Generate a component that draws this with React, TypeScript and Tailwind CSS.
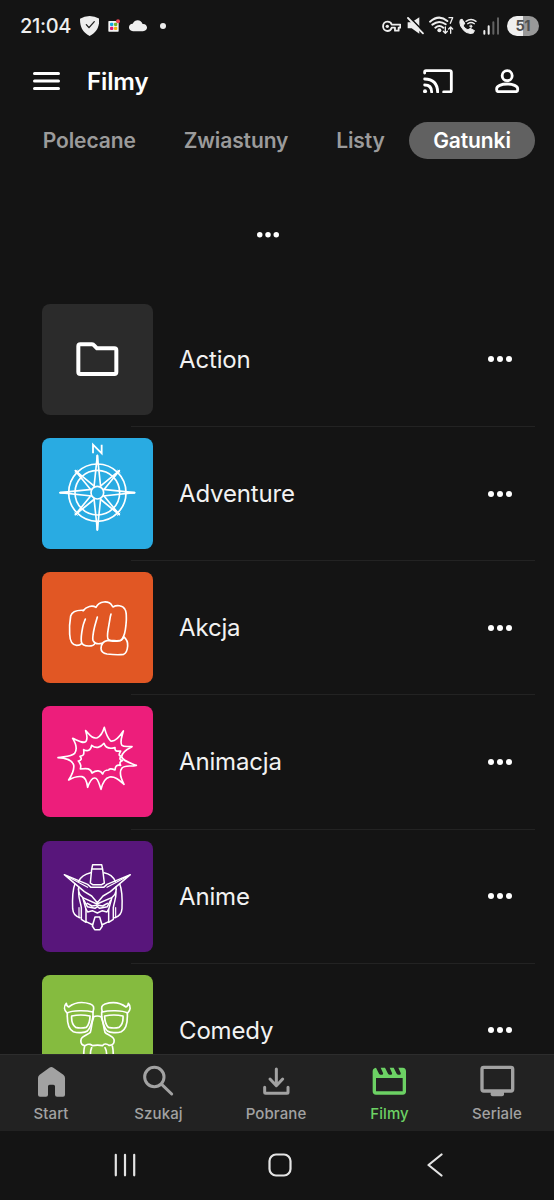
import type { ReactNode } from 'react';

type GlyphProps = {
  viewBox: string;
  className: string;
  children: ReactNode;
};

function Glyph({ viewBox, className, children }: GlyphProps) {
  return (
    <svg
      viewBox={viewBox}
      className={`shrink-0 ${className}`}
      fill="none"
      stroke="currentColor"
      strokeLinecap="round"
      strokeLinejoin="round"
      aria-hidden="true"
    >
      {children}
    </svg>
  );
}

const FolderArt = () => (
  <g strokeWidth="12">
    <path d="M115 121h35q4 0 7 4l8 8h52q6 0 6 6v65q0 6-6 6H115q-6 0-6-6v-77q0-6 6-6z" />
  </g>
);

const CompassArt = () => (
  <g transform="translate(-21 -25)" strokeWidth="5">
    <path d="M174 71V45l26 26V45" strokeWidth="5.5" strokeLinecap="butt" strokeLinejoin="miter" />
    <circle cx="187" cy="189" r="86" />
    <circle cx="187" cy="189" r="67" />
    {/* compass points */}
    <g fill="#29abe2">
      <path d="M121 123l44 54M121 123l54 44M253 123l-44 54M253 123l-54 44M121 255l44-54M121 255l54-44M253 255l-44-54M253 255l-54-44" />
      <path d="M187 77l-10 95M187 77l10 95M187 301l-10-95M187 301l10-95M75 189l95-10M75 189l95 10M299 189l-95-10M299 189l-95 10" />
      <circle cx="187" cy="189" r="19" />
    </g>
    <path d="M120 128l7-6M248 122l7 6M119 250l8 7M247 257l8-7" strokeWidth="3" />
    <path d="M187 78v18M187 300v-18M76 189h18M298 189h-18M123 125l13 13M251 125l-13 13M123 253l13-13M251 253l-13-13" strokeWidth="6" />
  </g>
);

const FistArt = () => (
  <g transform="translate(-21 -23)" strokeWidth="5">
    <path d="M146 138c-18-1-35 4-39 17-3 18-4 43-3 55 1 22 9 33 21 33 7 0 11-1 14-5" />
    <path d="M144 139c10-13 28-17 39-10 9-19 38-22 48-5 1 2 2 4 3 4 10-6 29-6 36 7 5 8 4 20 4 32-1 17-2 35-8 48-4 10-9 15-15 15-11 1-26 0-31-5-5-4-2-21 0-33l6-35c1-4 2-7 2-8" />
    <path d="M151 164c-3 9-6 14-8 25-3 15-5 35-4 43 1 9 11 13 23 13 8 0 15-2 18-8" />
    <path d="M187 158c-3 12-8 25-11 42-2 13-4 22-2 28 4 8 14 12 26 9" />
    <path d="M266 217c8 7 13 18 12 28-1 12-5 22-12 25-12 2-33 1-50-1-12-2-18-9-18-17 1-13 6-21 18-23 18-1 34 2 43-1 4-2 6-6 7-11z" />
  </g>
);

const BurstArt = () => (
  <g transform="translate(-21 -20)" strokeWidth="5">
    <path d="M69 175c23-4 39-3 50-13 8-12 4-29-6-45 18 8 31 17 40 9 5-7 4-16-1-32 12 12 20 26 35 21 12-5 17-17 21-31 4 16 11 33 19 41 12 3 28-15 38-30-4 17-12 34-4 43 6 6 20 2 30 4-14 7-30 18-31 29 0 13 23 19 44 27-19 4-36-1-43 8-8 10-4 30 6 49-15-13-26-24-43-22-14 3-22 20-26 37-6-17-9-34-18-34-11-1-17 13-22 28-2-15-7-30-17-32-13-2-28 3-40 10 9-14 18-29 15-45-5-16-26-21-47-22z" />
    <path d="M135 171c10-2 13-3 11-20 12 6 21 3 24-13 12 10 26 8 37-6 4 13 17 17 33 13-1 9 3 12 17 10-7 12-5 15 1 15-6 9-3 11 4 14-7 2-9 7-5 14-12-2-16 1-17 14-11-5-18-4-19 0-9 0-14 1-18 12-6-11-18-13-32-3-4-14-15-15-35-12 2-8 3-13-6-24 10-1 11-8 5-14z" />
  </g>
);

const MechaArt = () => (
  <g transform="translate(-21 -18)" strokeWidth="4.5">
    <path d="M173 89h27l3 14 5 41-8 5h-27l-7-5 4-41zM171 102h31" />
    <path d="M167 113c-17 4-30 12-36 26M207 113c16 3 28 12 34 26" />
    <path d="M88 119l70 29 10 9h38l10-9 70-29-60 51-22 13-17 20-17-20-22-13z" />
    <path d="M96 124l62 33M278 124l-62 33" strokeWidth="3.5" />
    <path d="M120 146c-9 22-8 51-7 75 1 14 7 23 22 27M254 146c9 22 8 51 7 75-1 14-7 23-22 27" />
    <path d="M131 155v20c0 16 6 27 8 43v35l14 9v-39l-10-36c-7-5-12-14-13-25M243 155v20c0 16-6 27-8 43v35l-14 9v-39l10-36c7-5 12-14 13-25" />
    <path d="M132 218v30M242 218v30" strokeWidth="3.5" />
    <path d="M143 188l43 19 44-19M147 196l10 19 23 5 7-5 7 5 23-5 10-19M157 205l14 8 14-2M217 205l-14 8-14-2" />
    <path d="M153 222l5 9 14-4 15 7 15-7 14 4 5-9" />
    <path d="M153 260l21 10M221 260l-21 10M180 246h14l8 27-7 11h-16l-7-11z" />
  </g>
);

const GlassesArt = () => (
  <g transform="translate(-21 -30)" strokeWidth="5">
    <path d="M94 115c-9 9-6 21 2 29 16-9 59-8 78-3 4-14 3-20-8-24-25-8-47-5-65 9-5-2-7-5-7-11z" />
    <path d="M280 115c9 9 6 21-2 29-16-9-59-8-76-3-4-14-3-20 8-24 25-8 45-5 63 9 5-2 7-5 7-11z" />
    <path d="M97 146c-1 25 5 48 18 54 14 5 34 3 42-2 10-9 14-25 17-43M277 146c1 25-5 48-18 54-14 5-34 3-42-2-10-9-14-25-17-43" />
    <path d="M110 153q27-6 55 0c0 12-3 26-11 34q-18 4-32 0c-8-6-13-20-12-34zM264 153q-27-6-55 0c0 12 3 26 11 34q18 4 32 0c8-6 13-20 12-34z" />
    <path d="M174 141v16q13-8 26 0v-16M175 160c-5 12-5 28-9 42-7 7-27 11-28 22-2 13 5 19 14 17 10-7 19-1 20 1q16-3 31 0c3-6 12-7 19-1 10 1 17-6 15-17-2-11-21-15-27-22-4-14-5-32-10-42" />
    <path d="M149 243c-3 12-4 24-1 40M232 243c3 12 4 24 1 40M170 248c-5 12-5 25 2 37M210 248c6 11 6 25 0 37" />
  </g>
);

const genres = [
  { name: 'Action', tile: 'bg-[#2b2b2b]', art: <FolderArt /> },
  { name: 'Adventure', tile: 'bg-[#29abe2]', art: <CompassArt /> },
  { name: 'Akcja', tile: 'bg-[#e15724]', art: <FistArt /> },
  { name: 'Animacja', tile: 'bg-[#ed1e7b]', art: <BurstArt /> },
  { name: 'Anime', tile: 'bg-[#58167b]', art: <MechaArt /> },
  { name: 'Comedy', tile: 'bg-[#85bb3f]', art: <GlassesArt /> }
];

const tabs = [
  { name: 'Polecane', width: 'w-[141.5px]' },
  { name: 'Zwiastuny', width: 'w-[152px]' },
  { name: 'Listy', width: 'w-[97px]' },
  { name: 'Gatunki', width: 'w-[126px]', active: true }
];

const navItems = [
  {
    name: 'Start',
    icon: (
      <path
        d="M147 69q6-4 12 0l30 21q5 4 5 10v50q0 6-6 6h-18q-6 0-6-6v-25q0-5-5-5h-11q-5 0-5 5v25q0 6-6 6h-18q-6 0-6-6v-50q0-6 5-10z"
        fill="currentColor"
        stroke="none"
      />
    ),
    viewBox: '104 61 98 98',
    width: 'w-[102px]'
  },
  {
    name: 'Szukaj',
    icon: (
      <g>
        <circle cx="463" cy="97" r="29" strokeWidth="9" />
        <path d="M485 119l30 29" strokeWidth="9" />
      </g>
    ),
    viewBox: '426 61 98 98',
    width: 'w-[113px]'
  },
  {
    name: 'Pobrane',
    icon: <path d="M828 73v49M809 103l19 20 19-20M793 128v15q0 3 3 3h64q3 0 3-3v-15" strokeWidth="9" />,
    viewBox: '779 61 98 98',
    width: 'w-[122px]'
  },
  {
    name: 'Filmy',
    icon: (
      <path
        d="M297 69l9 18q2 3 5 3h4q5 0 3-5l-7-16h13l9 18q2 3 5 3h4q5 0 3-5l-7-16h12l9 18q2 3 5 3h4q5 0 3-5l-7-16h13q10 1 10 11v60q0 10-10 10h-80q-10 0-10-10V80q0-9 10-11zm0 31v40h80v-40z"
        fill="currentColor"
        fillRule="evenodd"
        stroke="none"
      />
    ),
    viewBox: '288 61 98 98',
    width: 'w-[105px]',
    active: true
  },
  {
    name: 'Seriale',
    icon: (
      <g>
        <rect x="615" y="68" width="92" height="71" rx="5" strokeWidth="10" />
        <path d="M641 141h40v8q0 6-6 6h-28q-6 0-6-6z" fill="currentColor" stroke="none" />
      </g>
    ),
    viewBox: '612 61 98 98',
    width: 'w-[110px]'
  }
];

function Dots({ className }: { className: string }) {
  return (
    <Glyph viewBox="0 0 24 6" className={className}>
      <g fill="currentColor" stroke="none">
        <circle cx="3" cy="3" r="3" />
        <circle cx="12" cy="3" r="3" />
        <circle cx="21" cy="3" r="3" />
      </g>
    </Glyph>
  );
}

function StatusBar() {
  return (
    <div className="flex h-[52px] shrink-0 items-center pl-5 pr-[15px] text-[#eeeeee]">
      <span className="w-[60px] text-[20px] font-medium leading-none tracking-[-0.35px]">21:04</span>
      <Glyph viewBox="240 48 58 60" className="h-5 w-[19.3px]">
        <path d="M269 48q16 1 29 8c0 25-7 40-29 52-22-12-29-27-29-52q13-7 29-8z" fill="currentColor" stroke="none" />
        <path d="M259 74l8 9 16-18" stroke="#222222" strokeWidth="4" />
      </Glyph>
      <Glyph viewBox="324 58 36 40" className="ml-[8.7px] h-[13.3px] w-3">
        <g stroke="none">
          <rect x="325" y="64" width="31" height="32" rx="2" fill="#f5f5f5" />
          <rect x="330" y="69" width="10" height="10" rx="3" fill="#14a9e0" />
          <rect x="342" y="69" width="10" height="10" rx="3" fill="#70b62c" />
          <rect x="330" y="81" width="10" height="10" rx="3" fill="#df1672" />
          <rect x="342" y="81" width="10" height="10" rx="3" fill="#f5b111" />
          <circle cx="354" cy="65" r="6" fill="#f04455" />
        </g>
      </Glyph>
      <Glyph viewBox="386 60 56 35" className="ml-[8.7px] h-[11.6px] w-[18.6px]">
        <path d="M398 94c-17-1-15-23-1-23 7-15 26-13 30 1 16-2 19 21 1 22z" fill="currentColor" stroke="none" />
      </Glyph>
      <span className="ml-[13px] size-1.5 rounded-full bg-[#eeeeee]" />

      <div className="ml-auto flex items-center">
        <Glyph viewBox="317 61 58 38" className="h-[12.7px] w-[19.3px]">
          <path d="M333 66c9 0 12 4 13 9h26v9h-5v9h-11v-9h-10c-2 7-6 10-13 10-17 0-17-28 0-28z" strokeWidth="5.5" />
          <circle cx="333" cy="80" r="5" fill="currentColor" stroke="none" />
        </Glyph>
        <Glyph viewBox="391 54 52 52" className="ml-[5.5px] size-[17.3px]">
          <path d="M393 70h12l23-15v49l-23-16h-12z" fill="currentColor" stroke="none" />
          <path d="M399 55l43 44" stroke="#141414" strokeWidth="5" />
          <path d="M394 57l45 46" strokeWidth="5.5" />
        </Glyph>
        <Glyph viewBox="458 50 74 58" className="ml-[5px] h-[19.3px] w-[24.7px]">
          <path d="M461 67q27-23 52-2M468 76q20-16 40-1M477 85q12-10 24 0" strokeWidth="6" />
          <circle cx="489" cy="93" r="6" fill="currentColor" stroke="none" />
          <path d="M518 55h11l-7 17M507 83v18M501 96l6 6 6-6M523 102V84M517 89l6-6 6 6" strokeWidth="4" />
        </Glyph>
        <Glyph viewBox="547 54 56 50" className="ml-[5px] h-[16.7px] w-[18.7px]">
          <path
            d="M551 60l5-2 8 12-5 8q6 9 15 12l7-5 12 7-4 7c-20 7-45-20-38-39z"
            fill="currentColor"
            strokeWidth="3"
          />
          <path d="M568 64q15-11 30 0M573 71q10-7 20 0" strokeWidth="4" />
          <path d="M583 75l4 4-4 4-4-4z" fill="currentColor" strokeWidth="2" />
        </Glyph>
        <Glyph viewBox="620 52 50 54" className="ml-[5.7px] h-[18px] w-[16.7px]">
          <g strokeWidth="6">
            <path d="M624 94v8M637 80v22" />
            <path d="M651 68v34M665 56v46" stroke="#626262" />
          </g>
        </Glyph>
        <div className="ml-[6.5px] flex h-5 w-[32.5px] items-center justify-center rounded-full bg-linear-to-r from-[#efefef] from-50% to-[#999999] to-50% text-[14.5px] font-bold leading-none tracking-[-0.6px] text-[#505050]">
          51
        </div>
      </div>
    </div>
  );
}

function Header() {
  return (
    <header className="flex h-[57px] shrink-0 items-center pl-[33px] pr-[34px] pt-px text-white">
      <button type="button" aria-label="Menu">
        <Glyph viewBox="0 0 27 20" className="h-5 w-[27px]">
          <path d="M1.5 2.5h24M1.5 10h24M1.5 17.5h24" strokeWidth="3" />
        </Glyph>
      </button>
      <h1 className="ml-[27px] pt-px text-[24px] font-semibold leading-none tracking-[-0.1px]">Filmy</h1>
      <button type="button" aria-label="Cast" className="ml-auto">
        <Glyph viewBox="439 206 90 74" className="h-[24.7px] w-[30px]">
          <g strokeWidth="8.5">
            <path d="M444 218v-3q0-4 4-4h71q5 0 5 5v54q0 5-5 5h-18" />
            <path d="M444 236q38 1 39 39M444 254q21 0 21 21" />
          </g>
          <circle cx="445" cy="273" r="6" fill="currentColor" stroke="none" />
        </Glyph>
      </button>
      <button type="button" aria-label="Profile" className="ml-[42px]">
        <Glyph viewBox="655 206 74 74" className="size-[24.7px]">
          <circle cx="691.5" cy="226" r="15" strokeWidth="8.5" />
          <path
            d="M666 274q-6 0-6-6v-3c0-8 14-14 31.5-14s31.5 6 31.5 14v3q0 6-6 6z"
            strokeWidth="8.5"
          />
        </Glyph>
      </button>
    </header>
  );
}

export default function App() {
  return (
    <div className="flex h-[1200px] w-[554px] flex-col overflow-hidden bg-[#141414] font-['Inter',sans-serif]">
      <StatusBar />
      <Header />

      {/* Tabs */}
      <div className="flex h-[62px] shrink-0 items-center pl-[18.5px]">
        {tabs.map((tab) => (
          <button
            key={tab.name}
            type="button"
            className={`flex h-[37px] items-center justify-center rounded-full pt-px text-[21px] font-semibold tracking-[-0.1px] ${tab.width} ${
              tab.active ? 'bg-[#616161] text-white' : 'text-[#9b9b9b]'
            }`}
          >
            {tab.name}
          </button>
        ))}
      </div>

      <div className="flex h-[121.8px] shrink-0 justify-center pr-[18px] pt-[61px] text-white">
        <Dots className="h-[5.5px] w-[22px]" />
      </div>

      {/* Genre list */}
      <main className="min-h-0 flex-1 overflow-hidden">
        {genres.map((genre) => (
          <div key={genre.name} className="h-[134.2px] pr-[19px]">
            <div className="flex h-[133.2px] items-center pl-[42px] pr-[23px]">
              <div className={`size-[111px] shrink-0 overflow-hidden rounded-lg text-white ${genre.tile}`}>
                <Glyph viewBox="0 0 333 333" className="size-full">
                  {genre.art}
                </Glyph>
              </div>
              <span className="ml-[26px] pt-px text-[24px] leading-none tracking-[-0.15px] text-[#f2f2f2]">
                {genre.name}
              </span>
              <Dots className="ml-auto h-1.5 w-6 text-white" />
            </div>
            <div className="ml-[131px] h-px bg-[#232323]" />
          </div>
        ))}
      </main>

      {/* Bottom navigation */}
      <nav className="flex h-[77px] shrink-0 border-t border-[#2d2d2d] bg-[#222222] pt-[10px]">
        {navItems.map((item) => (
          <button
            key={item.name}
            type="button"
            className={`flex flex-col items-center ${item.width} ${item.active ? 'text-[#6cd164]' : 'text-[#a2a2a2]'}`}
          >
            <Glyph viewBox={item.viewBox} className="h-[32.7px] w-[32.7px] overflow-visible">
              {item.icon}
            </Glyph>
            <span className="mt-[6px] whitespace-nowrap text-[15px] font-medium leading-5 tracking-[0.1px]">{item.name}</span>
          </button>
        ))}
      </nav>

      {/* System buttons */}
      <div className="flex h-[69px] shrink-0 items-center justify-between pb-px pl-[113px] pr-[107px] text-[#e4e4e4]">
        <Glyph viewBox="0 0 24 24" className="size-6">
          <path d="M2.8 1.8v20.500M12 1.8v20.500M21.2 1.8v20.500" strokeWidth="2.2" />
        </Glyph>
        <Glyph viewBox="0 0 24 24" className="size-6">
          <rect x="1.5" y="1.5" width="21" height="21" rx="6.5" strokeWidth="2.2" />
        </Glyph>
        <Glyph viewBox="0 0 24 24" className="size-6">
          <path d="M18.5 1.5L5.5 12l13 10.5" strokeWidth="2.2" />
        </Glyph>
      </div>
    </div>
  );
}
